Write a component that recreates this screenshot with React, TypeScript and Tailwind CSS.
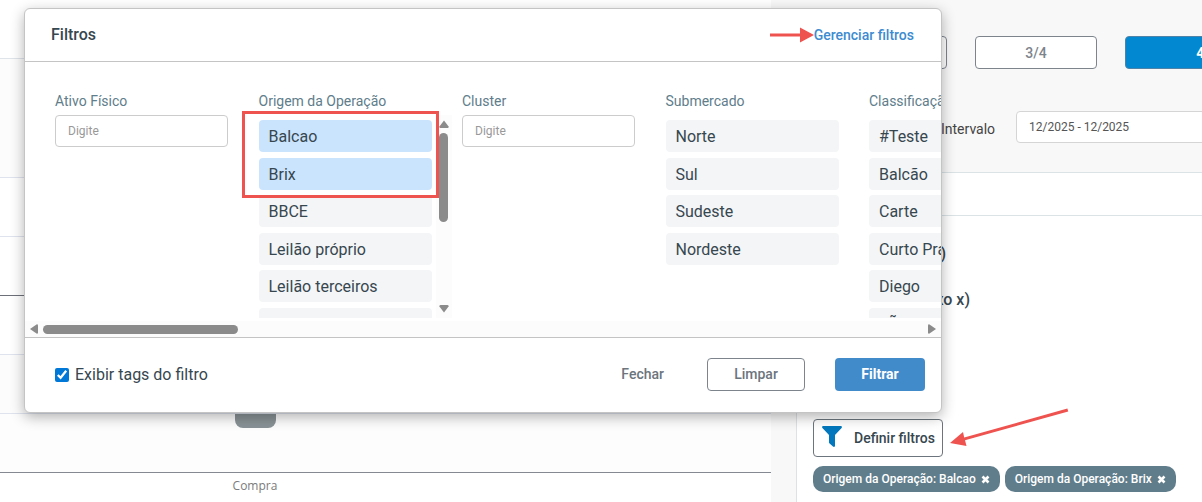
import clsx from 'clsx';
import { useState } from 'react';

type Column = {
  id: string;
  label: string;
  options?: string[];
  scrollable?: boolean;
};

const columns: Column[] = [
  { id: 'ativo', label: 'Ativo Físico' },
  {
    id: 'origem',
    label: 'Origem da Operação',
    options: [
      'Balcao',
      'Brix',
      'BBCE',
      'Leilão próprio',
      'Leilão terceiros',
      'Mecanismo compulsório',
    ],
    scrollable: true,
  },
  { id: 'cluster', label: 'Cluster' },
  {
    id: 'submercado',
    label: 'Submercado',
    options: ['Norte', 'Sul', 'Sudeste', 'Nordeste'],
  },
  {
    id: 'classificacao',
    label: 'Classificação',
    options: ['#Teste', 'Balcão', 'Carte', 'Curto Prazo', 'Diego', 'LÃO'],
  },
];

const OptionList = ({ column, selected, onToggle }: {
  column: Column;
  selected: string[];
  onToggle: (option: string) => void;
}) => (
  <div className="relative mt-1 h-[203px]">
    <div className="h-full overflow-hidden pt-[5px]">
      <div className="grid h-[225px] grid-cols-1 grid-rows-6">
        {column.options?.map((option) => {
          const active = column.id === 'origem' && selected.includes(option);

          return (
            <button
              key={option}
              type="button"
              aria-pressed={active}
              onClick={() => onToggle(option)}
              className={clsx(
                'flex h-8 items-center overflow-hidden rounded px-[10px] pt-0.5 text-left text-base whitespace-nowrap',
                active ? 'bg-[#cbe4fe]' : 'bg-[#f4f5f7]',
              )}
            >
              {option}
            </button>
          );
        })}
      </div>
    </div>

    {column.scrollable && (
      <>
        <div className="absolute top-0 left-[177px] flex h-full w-4 flex-col items-center bg-[#fcfcfc] py-[5px]">
          <svg width="10" height="8" viewBox="0 0 10 8" fill="#8b8b8b">
            <path d="M5 0.5 L9.6 6.5 Q10 8 8.5 8 H1.5 Q0 8 0.4 6.5Z" />
          </svg>
          <div className="mt-[5px] h-[89px] w-[9px] rounded-full bg-[#8b8b8b]" />
          <svg
            className="mt-auto"
            width="10"
            height="8"
            viewBox="0 0 10 8"
            fill="#8b8b8b"
          >
            <path d="M5 7.5 L9.6 1.5 Q10 0 8.5 0 H1.5 Q0 0 0.4 1.5Z" />
          </svg>
        </div>
        <div className="pointer-events-none absolute -top-1 -left-[17px] h-[87px] w-[197px] border-[3px] border-[#ef5350]" />
      </>
    )}
  </div>
);

const FilterDialog = ({ selected, onToggle, onClear }: {
  selected: string[];
  onToggle: (option: string) => void;
  onClear: () => void;
}) => {
  const [showTags, setShowTags] = useState(true);

  return (
    <div
      role="dialog"
      aria-label="Filtros"
      className="absolute top-2 right-[260px] left-6 overflow-hidden rounded-md border border-[#c4c4c4] bg-white text-[#37474f] shadow-[0_4px_14px_rgba(0,0,0,0.3)]"
    >
      <header className="flex h-[53px] items-center justify-between border-b border-[#c4c4c4] pr-[27px] pl-[26px]">
        <h2 className="text-base font-medium">Filtros</h2>
        <div className="flex items-center">
          <svg width="44" height="16" viewBox="0 0 44 16" fill="#ef5350">
            <path d="M0 6.5 H30 V0.5 L44 8 L30 15.5 V9.5 H0Z" />
          </svg>
          <a href="#" className="text-sm font-medium text-[#3d8bd0]">
            Gerenciar filtros
          </a>
        </div>
      </header>

      <div className="overflow-hidden pt-[29px] pl-[30px]">
        <div className="flex w-[987px] justify-between">
          {columns.map((column) => (
            <div key={column.id} className="w-[173px]">
              <label
                htmlFor={column.options ? undefined : column.id}
                className="block h-5 text-sm leading-5 whitespace-nowrap text-[#607d8b]"
              >
                {column.label}
              </label>
              {column.options ? (
                <OptionList
                  column={column}
                  selected={selected}
                  onToggle={onToggle}
                />
              ) : (
                <input
                  id={column.id}
                  placeholder="Digite"
                  className="mt-1 h-8 w-full rounded border border-[#ccc] px-3 text-xs placeholder:text-[#999]"
                />
              )}
            </div>
          ))}
        </div>
      </div>

      <div className="mt-[3px] flex h-4 items-center bg-[#fcfcfc] px-[5px]">
        <svg width="8" height="10" viewBox="0 0 8 10" fill="#8b8b8b">
          <path d="M0 5 L6.5 0.4 Q8 0 8 1.5 V8.5 Q8 10 6.5 9.6Z" />
        </svg>
        <div className="ml-[5px] h-[9px] w-[195px] rounded-full bg-[#8b8b8b]" />
        <svg
          className="ml-auto"
          width="8"
          height="10"
          viewBox="0 0 8 10"
          fill="#8b8b8b"
        >
          <path d="M8 5 L1.5 0.4 Q0 0 0 1.5 V8.5 Q0 10 1.5 9.6Z" />
        </svg>
      </div>

      <footer className="flex h-[75px] items-center border-t border-[#c4c4c4] pr-4 pl-[30px]">
        <label className="flex items-center gap-[6px] text-base">
          <input
            type="checkbox"
            checked={showTags}
            onChange={() => setShowTags(!showTags)}
            className="size-[14px] accent-[#0078d7]"
          />
          Exibir tags do filtro
        </label>
        <div className="ml-auto flex items-center pb-0.5 text-sm font-medium text-[#6c757d]">
          <button type="button" className="px-[43px]">
            Fechar
          </button>
          <button
            type="button"
            onClick={onClear}
            className="h-[33px] w-[98px] rounded border border-[#7d848c]"
          >
            Limpar
          </button>
          <button
            type="button"
            className="ml-[30px] h-[33px] w-[90px] rounded bg-[#428bca] font-bold text-white"
          >
            Filtrar
          </button>
        </div>
      </footer>
    </div>
  );
};

const Chart = () => (
  <section className="min-w-0 flex-1 bg-white">
    <div className="h-[59px] border-b border-[#dfe3ea]" />
    <div className="h-[119px] border-b border-[#dfe3ee] bg-[#fcfcfc]" />
    <div className="h-[59px] border-b border-[#dfe3ee]" />
    <div className="h-[59px] border-b border-[#6e7079]" />
    <div className="h-[59px] border-b border-[#dfe3ee]" />
    <div className="h-[59px] border-b border-[#dfe3ee] bg-[#fcfcfc]" />
    <div className="h-[59px] border-b border-[#858a92] bg-[#fdfdfd]">
      <div className="ml-[235px] h-[14px] w-[41px] rounded-b-lg bg-[#899296]" />
    </div>
    <div className="ml-[215px] w-20 pt-1 text-center font-['Open_Sans',sans-serif] text-xs leading-[18px] text-[#7b7b7b]">
      Compra
    </div>
  </section>
);

const Sidebar = ({ selected, onRemove }: {
  selected: string[];
  onRemove: (option: string) => void;
}) => (
  <aside className="w-[431px] shrink-0 overflow-hidden bg-[#f8f8f8] pl-[25px]">
    <div className="flex gap-7 pt-9 pl-[29px] text-sm font-medium text-[#7d848c]">
      <button
        type="button"
        className="h-[33px] w-[122px] shrink-0 rounded border border-[#7d848c] bg-white"
      >
        2/4
      </button>
      <button
        type="button"
        className="h-[33px] w-[122px] shrink-0 rounded border border-[#7d848c] bg-white"
      >
        3/4
      </button>
      <button
        type="button"
        className="h-[33px] w-[164px] shrink-0 rounded border border-[#4f84a8] bg-[#0288d1] font-bold text-white"
      >
        4/4
      </button>
    </div>

    <div className="mt-[42px] flex items-center pb-[29px] pl-[145px]">
      <label
        htmlFor="intervalo"
        className="w-[75px] shrink-0 pt-1 text-sm text-[#444]"
      >
        Intervalo
      </label>
      <input
        id="intervalo"
        defaultValue="12/2025 - 12/2025"
        className="h-8 w-[220px] shrink-0 rounded border border-[#d5d5d5] bg-white px-3 text-xs text-[#555]"
      />
    </div>

    <div className="h-full border-t border-l border-[#dbe3e6] bg-white text-[#37474f]">
      <div className="h-[43px] border-b border-[#dbe3e6]" />
      <div className="pt-[26px] pl-4">
        <div className="w-[133px] text-right text-base font-medium">
          (eixo y)
        </div>
        <div className="mt-[22px] w-[157px] text-right text-base font-medium">
          (eixo x)
        </div>

        <div className="relative mt-[107px] w-[130px]">
          <button
            type="button"
            className="flex h-[38px] w-full items-center rounded border border-[#6c757d] pl-2 text-sm font-medium whitespace-nowrap"
          >
            <svg
              className="mb-1"
              width="20"
              height="21"
              viewBox="0 0 20 21"
              fill="#0277bd"
            >
              <path d="M0.8 0 H19.2 Q20.4 0.8 19.6 2 L13 9 V20 Q12.4 21.4 11 20.6 L7.6 17.6 Q7 17 7 16.4 V9 L0.4 2 Q-0.4 0.8 0.8 0Z" />
            </svg>
            <span className="ml-3">Definir filtros</span>
          </button>
          <svg
            className="absolute -top-[11px] left-[137px]"
            width="119"
            height="40"
            viewBox="0 0 119 40"
            fill="#ef5350"
          >
            <path d="M0 35 L13 24 L14.2 29.5 L117.4 0.6 L118.2 3.4 L15 32.2 L16.5 38Z" />
          </svg>
        </div>

        <div className="mt-[9px] flex gap-[5px]">
          {selected.map((option) => (
            <span
              key={option}
              className="flex h-[26px] shrink-0 items-center gap-[5px] rounded-[10px] bg-[#607d8b] px-[10px] text-xs font-medium text-white"
            >
              Origem da Operação: {option}
              <button
                type="button"
                aria-label={`Remover ${option}`}
                onClick={() => onRemove(option)}
              >
                <svg width="9" height="9" viewBox="0 0 9 9">
                  <path
                    d="M1.5 1.5 L7.5 7.5 M7.5 1.5 L1.5 7.5"
                    stroke="currentColor"
                    strokeWidth="2.6"
                  />
                </svg>
              </button>
            </span>
          ))}
        </div>
      </div>
    </div>
  </aside>
);

const App = () => {
  const [selected, setSelected] = useState(['Balcao', 'Brix']);

  const toggle = (option: string) => {
    setSelected(
      selected.includes(option)
        ? selected.filter((item) => item !== option)
        : [...selected, option],
    );
  };

  return (
    <main className="relative flex h-screen overflow-hidden font-[Roboto,sans-serif]">
      <Chart />
      <Sidebar selected={selected} onRemove={toggle} />
      <FilterDialog
        selected={selected}
        onToggle={toggle}
        onClear={() => setSelected([])}
      />
    </main>
  );
};

export default App;
